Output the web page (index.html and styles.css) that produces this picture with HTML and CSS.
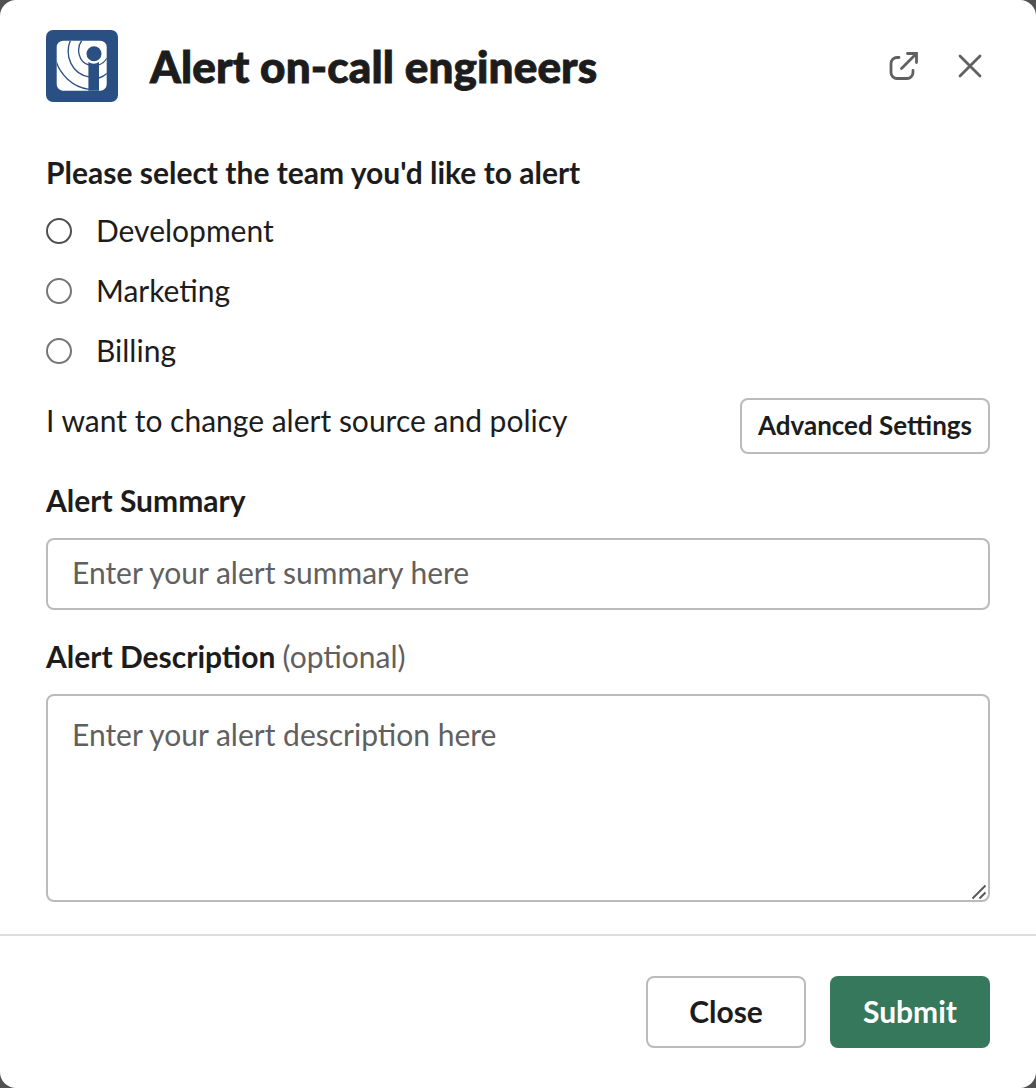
FILE: index.html
```html
<!DOCTYPE html>
<html lang="en">
<head>
<meta charset="utf-8">
<title>Alert on-call engineers</title>
<link rel="stylesheet" href="styles.css">
</head>
<body>
<form class="dialog">
  <header class="header">
    <svg class="logo" viewBox="0 0 72 72" aria-hidden="true">
      <defs><clipPath id="tile"><rect x="10.700" y="10.700" width="50" height="50" rx="6.500"/></clipPath></defs>
      <rect width="72" height="72" rx="7" fill="#2a5083"/>
      <g clip-path="url(#tile)">
        <rect x="10" y="10" width="51" height="51" fill="#fff"/>
        <g fill="none" stroke="#2a5083" stroke-width="1.300">
          <path d="M10 31C14 44 26 57 43 59.300"/>
          <path d="M24.500 10C18 26 26 44 43 46.800"/>
          <path d="M53 48q5-1.300 9-5.500"/>
          <path d="M36 10C30 18 32 32 43 35"/>
          <path d="M53 35q5.500-2.300 8-7"/>
        </g>
        <circle cx="48" cy="23.700" r="7.500" fill="#2a5083"/>
        <path d="M42.400 32q5.300 3.500 10.600 0v29H42.400z" fill="#2a5083"/>
      </g>
    </svg>
    <h1 class="title">Alert on-call engineers</h1>
    <button class="icon-button" type="button" aria-label="Open in new window">
      <svg width="36" height="36" viewBox="0 0 36 36"><path d="M13 9.500H11a6 6 0 0 0-6 6v9a6 6 0 0 0 6 6h10a6 6 0 0 0 6-6v-2M15.500 20.500 30.500 5.500M21.500 5.500h9v9"/></svg>
    </button>
    <button class="icon-button" type="button" aria-label="Close dialog">
      <svg width="36" height="36" viewBox="0 0 36 36"><path d="m8 8 20 20M28 8 8 28"/></svg>
    </button>
  </header>
  <main class="content">
    <fieldset class="teams">
      <legend class="label">Please select the team you'd like to alert</legend>
      <label class="option"><input class="radio radio-active" type="radio" name="team">Development</label>
      <label class="option"><input class="radio" type="radio" name="team">Marketing</label>
      <label class="option"><input class="radio" type="radio" name="team">Billing</label>
    </fieldset>
    <div class="settings">
      <span>I want to change alert source and policy</span>
      <button class="button button-small" type="button">Advanced Settings</button>
    </div>
    <label class="label" for="summary">Alert Summary</label>
    <input class="field summary" id="summary" placeholder="Enter your alert summary here">
    <label class="label" for="description">Alert Description <span class="optional">(optional)</span></label>
    <div class="description-wrap">
      <textarea class="field description" id="description" placeholder="Enter your alert description here"></textarea>
      <svg class="grip" width="16" height="16" viewBox="0 0 16 16" aria-hidden="true"><path d="M1.500 14.500 14.500 1.500M8.500 14.500l6-6"/></svg>
    </div>
  </main>
  <footer class="footer">
    <button class="button" type="button">Close</button>
    <button class="button button-primary" type="button">Submit</button>
  </footer>
</form>
</body>
</html>
```
FILE: styles.css
```css
* { box-sizing: border-box; }
body {
  margin: 0;
  background: #515151;
  color: #1d1c1d;
  font: 30px/44px Lato, sans-serif;
}
button, input, textarea { font: inherit; color: inherit; }
.dialog {
  display: flex;
  flex-direction: column;
  height: 1088px;
  background: #fff;
  border-radius: 16px;
  overflow: hidden;
}
.header {
  display: flex;
  align-items: center;
  padding: 30px 48px 0 46px;
  height: 102px;
}
.logo { width: 72px; height: 72px; }
.title {
  flex: 1;
  margin: 0 0 0 32px;
  font-size: 44px;
  font-weight: 900;
  line-height: 56px;
  letter-spacing: 0.14px;
  -webkit-text-stroke: 0.9px currentColor;
}
.icon-button {
  display: flex;
  padding: 0;
  margin-left: 30px;
  border: 0;
  background: none;
}
.icon-button path {
  fill: none;
  stroke: #616061;
  stroke-width: 2.8;
  stroke-linecap: round;
}
.content { padding: 48px 46px 0; flex: 1; }
.teams { margin: 0; padding: 0; border: 0; }
.label { display: block; padding: 0; font-weight: 700; }
.option {
  display: flex;
  align-items: center;
  height: 44px;
  margin: 14px 0 16px;
}
.option + .option { margin-top: 0; }
.radio {
  appearance: none;
  width: 26px;
  height: 26px;
  margin: 2px 24px 0 0;
  border: 2px solid #767676;
  border-radius: 50%;
}
.radio-active { border-color: #4f4f4f; }
.settings {
  display: flex;
  justify-content: space-between;
  height: 56px;
  margin: 10px 0 24px;
}
.button {
  width: 160px;
  height: 72px;
  padding: 0 0 2px;
  border: 2px solid #bbb;
  border-radius: 8px;
  background: #fff;
  font-weight: 700;
}
.button-small { width: 250px; height: 56px; font-size: 26px; }
.button-primary { border: 0; background: #35785b; color: #fff; }
.field {
  display: block;
  width: 100%;
  border: 2px solid #bbb;
  border-radius: 8px;
  background: #fff;
}
.field::placeholder { color: #616061; opacity: 1; }
.summary { height: 72px; margin: 16px 0 24px; padding: 0 24px 4px; }
.optional { color: #616061; font-weight: 400; }
.description-wrap { position: relative; margin-top: 16px; }
.description { height: 208px; padding: 16px 24px; resize: none; }
.grip { position: absolute; right: 3px; bottom: 2px; }
.grip path { stroke: #555; stroke-width: 1.8; fill: none; }
.footer {
  display: flex;
  justify-content: flex-end;
  gap: 24px;
  height: 154px;
  padding: 40px 46px;
  border-top: 2px solid #ddd;
}
```
